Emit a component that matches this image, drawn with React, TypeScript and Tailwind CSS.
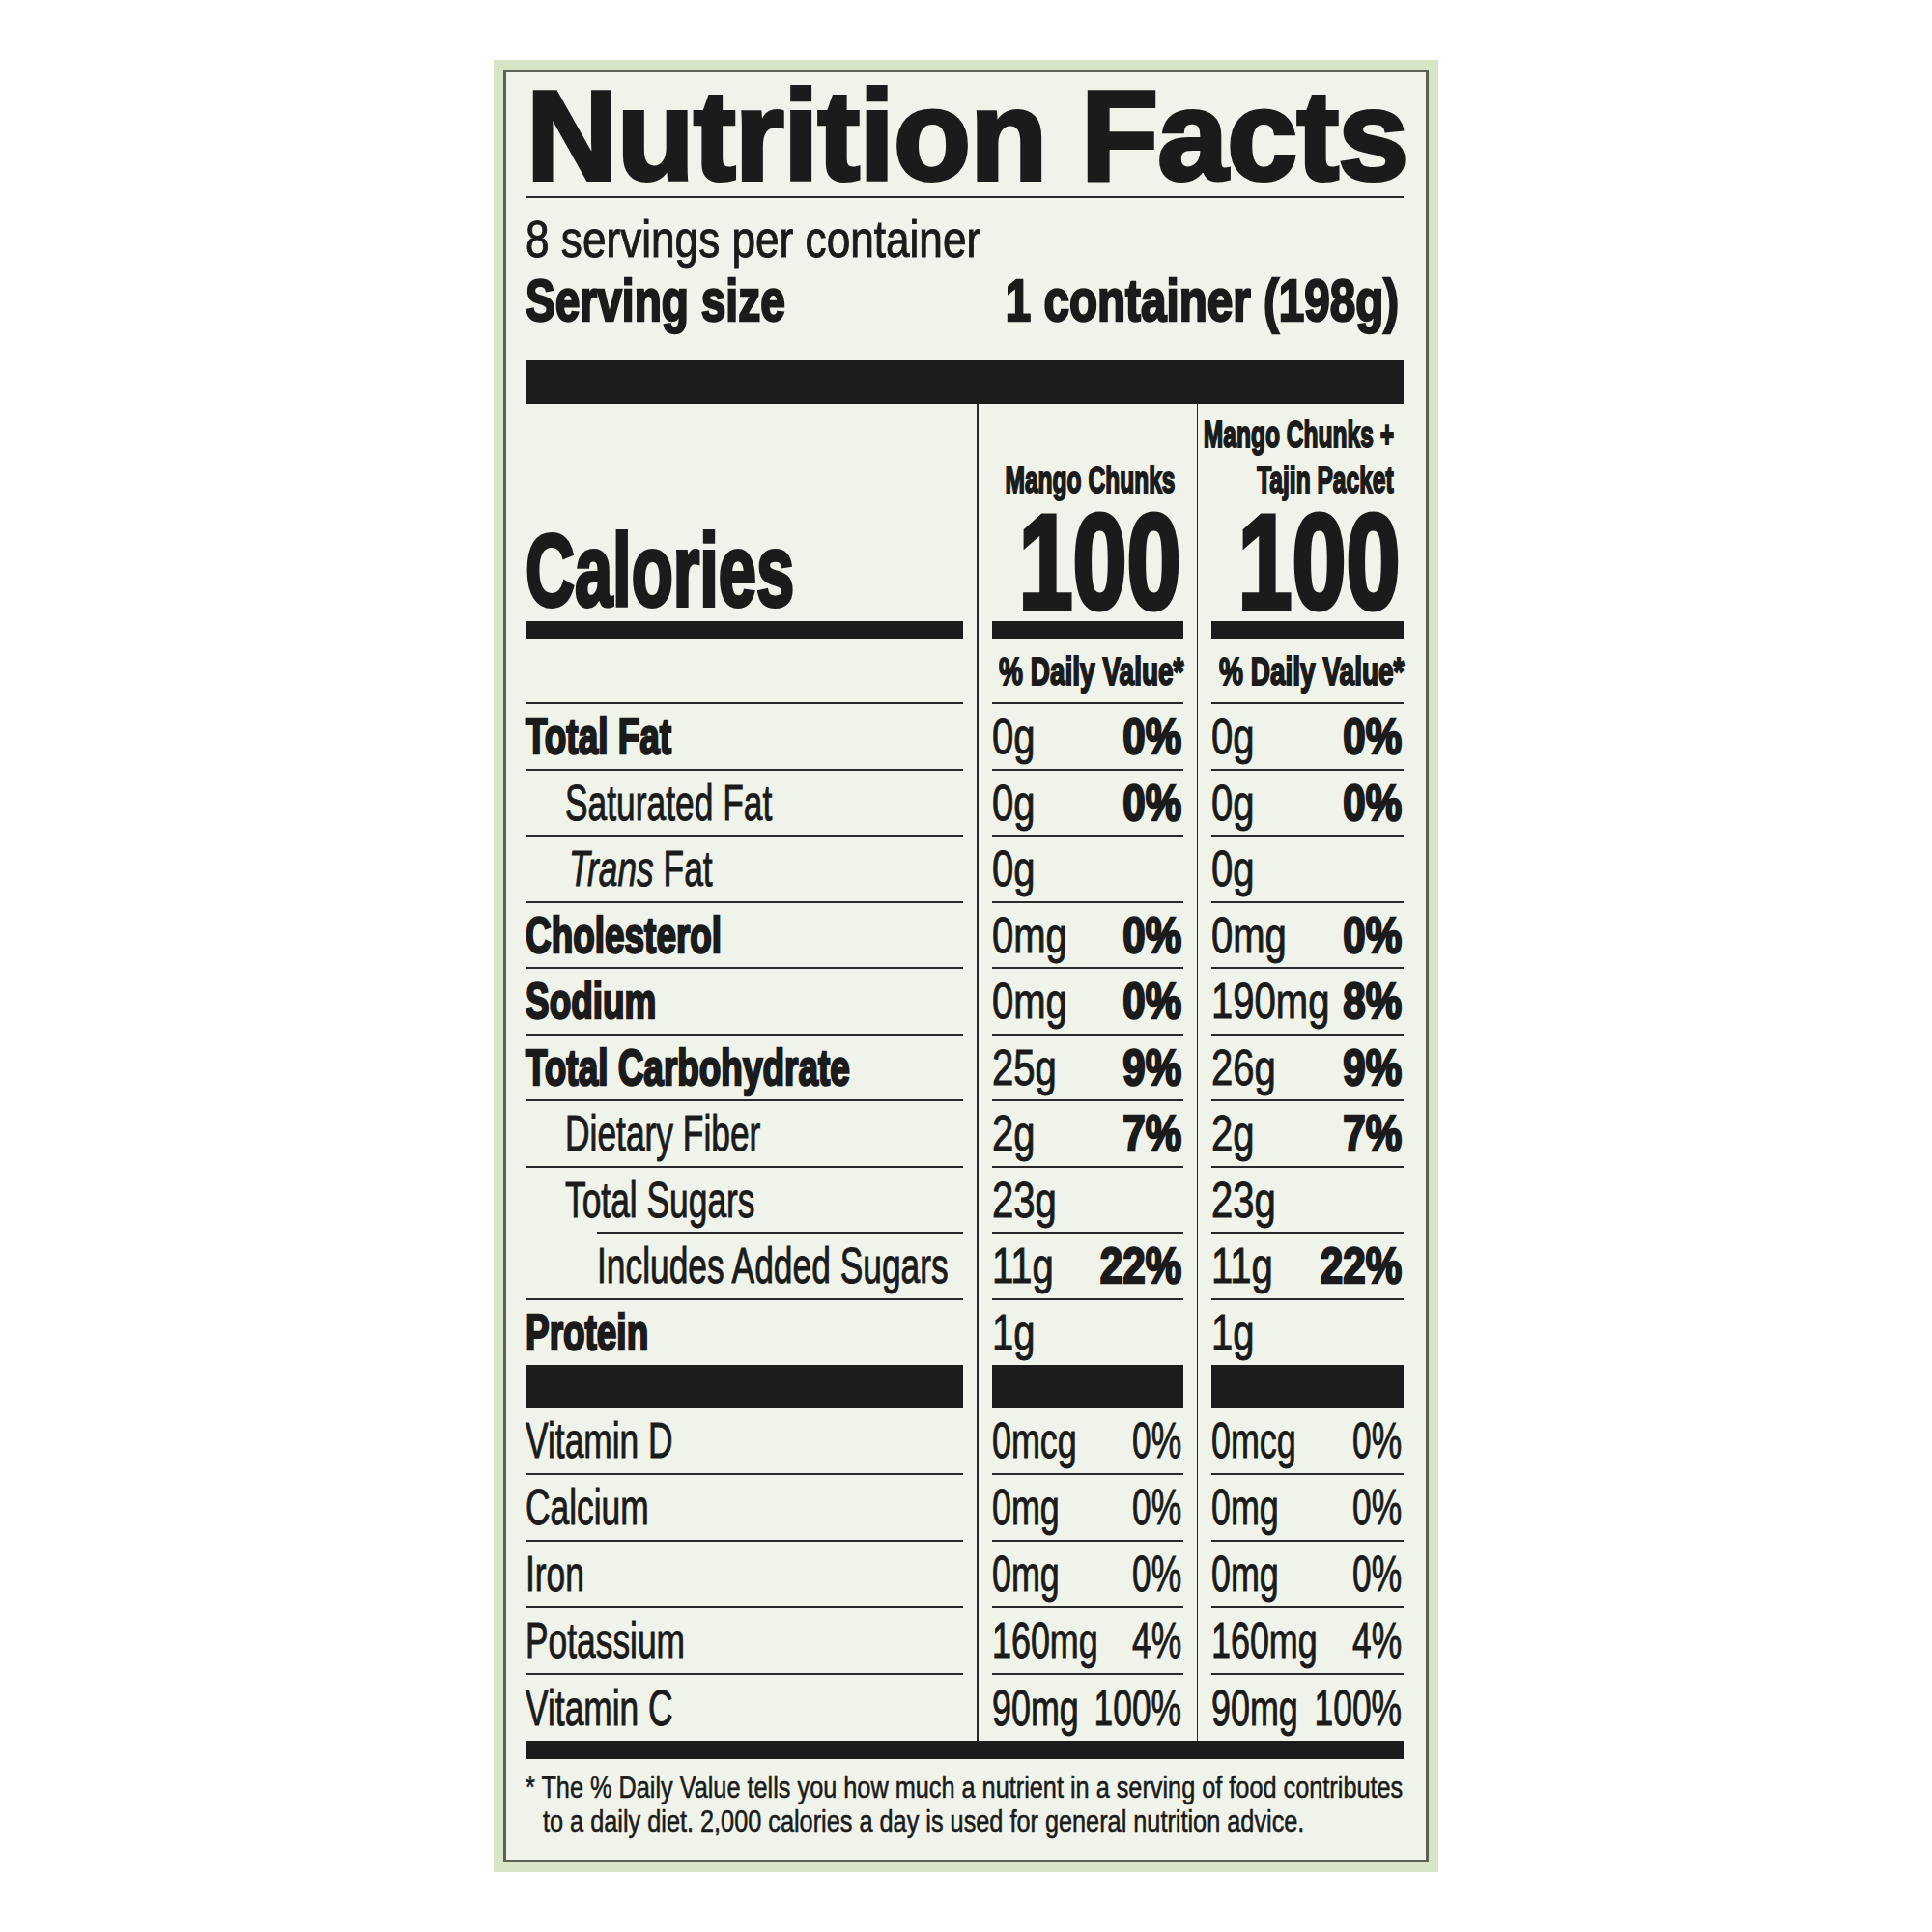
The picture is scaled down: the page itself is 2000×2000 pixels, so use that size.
const sans = "font-['Liberation_Sans','Arial',sans-serif]";

// condensed-black look: bold face plus a stroke, regular face gets a hairline stroke
const thin = "[-webkit-text-stroke:1px_#1b1b1b]";
const heavy = "font-bold [-webkit-text-stroke:2.5px_#1b1b1b]";

type Amount = [string, string];

interface NutrientRow {
  label: React.ReactNode;
  bold?: boolean;
  pad?: string;
  a: Amount;
  b: Amount;
  ruleIndent?: string;
}

const nutrients: NutrientRow[] = [
  { label: "Total Fat", bold: true, a: ["0g", "0%"], b: ["0g", "0%"] },
  { label: "Saturated Fat", pad: "pl-[41px]", a: ["0g", "0%"], b: ["0g", "0%"] },
  {
    label: (
      <>
        <i>Trans</i> Fat
      </>
    ),
    pad: "pl-[45px]",
    a: ["0g", ""],
    b: ["0g", ""],
  },
  { label: "Cholesterol", bold: true, a: ["0mg", "0%"], b: ["0mg", "0%"] },
  { label: "Sodium", bold: true, a: ["0mg", "0%"], b: ["190mg", "8%"] },
  { label: "Total Carbohydrate", bold: true, a: ["25g", "9%"], b: ["26g", "9%"] },
  { label: "Dietary Fiber", pad: "pl-[41px]", a: ["2g", "7%"], b: ["2g", "7%"] },
  { label: "Total Sugars", pad: "pl-[41px]", a: ["23g", ""], b: ["23g", ""], ruleIndent: "ml-[74px]" },
  { label: "Includes Added Sugars", pad: "pl-[74px]", a: ["11g", "22%"], b: ["11g", "22%"] },
];

const vitamins: { label: string; a: Amount; b: Amount }[] = [
  { label: "Vitamin D", a: ["0mcg", "0%"], b: ["0mcg", "0%"] },
  { label: "Calcium", a: ["0mg", "0%"], b: ["0mg", "0%"] },
  { label: "Iron", a: ["0mg", "0%"], b: ["0mg", "0%"] },
  { label: "Potassium", a: ["160mg", "4%"], b: ["160mg", "4%"] },
  { label: "Vitamin C", a: ["90mg", "100%"], b: ["90mg", "100%"] },
];

// Condensed type: no narrow face installed, so squeeze Liberation Sans horizontally.
// The wrapper is zero-width so the unscaled glyph box never pushes the layout around.
const Fit = ({
  sx,
  right = false,
  className = "",
  children,
}: {
  sx: string;
  right?: boolean;
  className?: string;
  children: React.ReactNode;
}) => (
  <div className={`flex w-0 shrink-0 ${right ? "justify-end" : "justify-start"} ${className}`}>
    <span className={`shrink-0 whitespace-nowrap ${right ? "origin-right" : "origin-left"} ${sx}`}>{children}</span>
  </div>
);

// vertical rule between the columns, rows stack with no gaps so it reads as one line
const Divider = ({ w = "w-[30px]" }: { w?: string }) => (
  <div className={`${w} shrink-0 flex justify-center`}>
    <div className="w-[1.5px] bg-[#2a2a2a]" />
  </div>
);

const Rule = ({ className = "" }: { className?: string }) => (
  <div className={`h-[2px] bg-[#2a2a2a] ${className}`} />
);

const AmountCell = ({ v, vitamin, rule }: { v: Amount; vitamin: boolean; rule: boolean }) => (
  <div className="flex-1 flex flex-col">
    <div className={`flex-1 flex items-center justify-between text-[52px] leading-none ${thin}`}>
      <Fit sx={vitamin ? "scale-x-[0.69]" : "scale-x-[0.77]"}>{v[0]}</Fit>
      {v[1] && (
        <Fit right sx={vitamin ? "scale-x-[0.68]" : `scale-x-[0.81] ${heavy}`} className="mr-[2px]">
          {v[1]}
        </Fit>
      )}
    </div>
    {rule && <Rule />}
  </div>
);

const TableRow = ({
  label,
  labelClass,
  labelScale,
  a,
  b,
  height,
  rule,
  ruleIndent = "",
  vitamin = false,
}: {
  label: React.ReactNode;
  labelClass: string;
  labelScale: string;
  a: Amount;
  b: Amount;
  height: string;
  rule: boolean;
  ruleIndent?: string;
  vitamin?: boolean;
}) => (
  <div className={`flex ${height}`}>
    <div className="w-[453px] shrink-0 flex flex-col">
      <div className={`flex-1 flex items-center text-[52px] leading-none ${labelClass}`}>
        <Fit sx={labelScale}>{label}</Fit>
      </div>
      {rule && <Rule className={ruleIndent} />}
    </div>
    <Divider />
    <div className="w-[198px] shrink-0 flex">
      <AmountCell v={a} vitamin={vitamin} rule={rule} />
    </div>
    <Divider w="w-[29px]" />
    <div className="w-[199px] shrink-0 flex">
      <AmountCell v={b} vitamin={vitamin} rule={rule} />
    </div>
  </div>
);

const BarRow = ({ height }: { height: string }) => (
  <div className={`flex ${height}`}>
    <div className="w-[453px] shrink-0 bg-[#1c1c1c]" />
    <Divider />
    <div className="w-[198px] shrink-0 bg-[#1c1c1c]" />
    <Divider w="w-[29px]" />
    <div className="w-[199px] shrink-0 bg-[#1c1c1c]" />
  </div>
);

const ColumnHead = ({ lines }: { lines: string[] }) => (
  <div className="w-[198px] shrink-0 flex flex-col justify-end items-end font-bold">
    <div className="flex flex-col items-end pr-[9px] text-[39px] leading-[47px] [-webkit-text-stroke:2px_#1b1b1b]">
      {lines.map((l) => (
        <Fit key={l} right sx="scale-x-[0.63]">
          {l}
        </Fit>
      ))}
    </div>
    <div className="text-[140px] leading-[123px] mr-[2px] [-webkit-text-stroke:5px_#1b1b1b]">
      <Fit right sx="scale-x-[0.72]">
        100
      </Fit>
    </div>
  </div>
);

export default function App() {
  return (
    <div className="min-h-screen bg-white pt-[62px]">
      <div className="mx-auto w-[978px] bg-[#d5e5c5] p-[10px]">
        <div className={`border-[3px] border-[#5a6354] bg-[#eff3ea] pl-[20px] pr-[23px] pb-[22px] text-[#1b1b1b] ${sans}`}>
          {/* header */}
          <div className="h-[128px] pl-[1px] font-bold text-[131px] leading-none tracking-[-0.8px] whitespace-nowrap [-webkit-text-stroke:4px_#1b1b1b]">
            Nutrition Facts
          </div>
          <Rule />
          <div className={`mt-[16px] text-[53px] leading-none ${thin}`}>
            <Fit sx="scale-x-[0.833]">8 servings per container</Fit>
          </div>
          <div className="mt-[7px] flex justify-between text-[61px] leading-none font-bold [-webkit-text-stroke:2.5px_#1b1b1b]">
            <Fit sx="scale-x-[0.755]">Serving size</Fit>
            <Fit right sx="scale-x-[0.78]" className="mr-[5px]">
              1 container (198g)
            </Fit>
          </div>
          <div className="mt-[31px] h-[45px] bg-[#1c1c1c]" />

          {/* calories */}
          <div className="flex h-[225px]">
            <div className="w-[453px] shrink-0 flex items-end">
              <Fit sx="scale-x-[0.665]" className="text-[106px] leading-none font-bold [-webkit-text-stroke:4px_#1b1b1b]">
                Calories
              </Fit>
            </div>
            <Divider />
            <ColumnHead lines={["Mango Chunks"]} />
            <Divider w="w-[29px]" />
            <ColumnHead lines={["Mango Chunks +", "Tajin Packet"]} />
          </div>
          <BarRow height="h-[19px]" />

          {/* % daily value heading */}
          <div className="flex h-[67px]">
            <div className="w-[453px] shrink-0 flex flex-col justify-end">
              <Rule />
            </div>
            <Divider />
            <div className="w-[198px] shrink-0 flex flex-col">
              <div className="flex-1 flex items-center justify-end text-[40px] leading-none font-bold [-webkit-text-stroke:2px_#1b1b1b]">
                <Fit right sx="scale-x-[0.70]">% Daily Value*</Fit>
              </div>
              <Rule />
            </div>
            <Divider w="w-[29px]" />
            <div className="w-[199px] shrink-0 flex flex-col">
              <div className="flex-1 flex items-center justify-end text-[40px] leading-none font-bold [-webkit-text-stroke:2px_#1b1b1b]">
                <Fit right sx="scale-x-[0.70]">% Daily Value*</Fit>
              </div>
              <Rule />
            </div>
          </div>

          {nutrients.map((n, i) => (
            <TableRow
              key={i}
              label={n.label}
              labelClass={`${n.bold ? heavy : thin} ${n.pad ?? ""}`}
              labelScale={n.bold ? "scale-x-[0.71]" : "scale-x-[0.68]"}
              a={n.a}
              b={n.b}
              height="h-[68.5px]"
              rule
              ruleIndent={n.ruleIndent}
            />
          ))}
          <TableRow
            label="Protein"
            labelClass={heavy}
            labelScale="scale-x-[0.71]"
            a={["1g", ""]}
            b={["1g", ""]}
            height="h-[67px]"
            rule={false}
          />
          <BarRow height="h-[45px]" />

          {vitamins.map((v, i) => (
            <TableRow
              key={v.label}
              label={v.label}
              labelClass={thin}
              labelScale="scale-x-[0.68]"
              a={v.a}
              b={v.b}
              height={i === vitamins.length - 1 ? "h-[68px]" : "h-[69px]"}
              rule={i !== vitamins.length - 1}
              vitamin
            />
          ))}
          <div className="h-[19px] bg-[#1c1c1c]" />

          {/* footnote */}
          <div className={`mt-[12px] text-[32px] leading-[35px] [-webkit-text-stroke:0.6px_#1b1b1b]`}>
            <Fit sx="scale-x-[0.79]">* The % Daily Value tells you how much a nutrient in a serving of food contributes</Fit>
            <Fit sx="scale-x-[0.79]" className="ml-[18px]">
              to a daily diet. 2,000 calories a day is used for general nutrition advice.
            </Fit>
          </div>
        </div>
      </div>
    </div>
  );
}
